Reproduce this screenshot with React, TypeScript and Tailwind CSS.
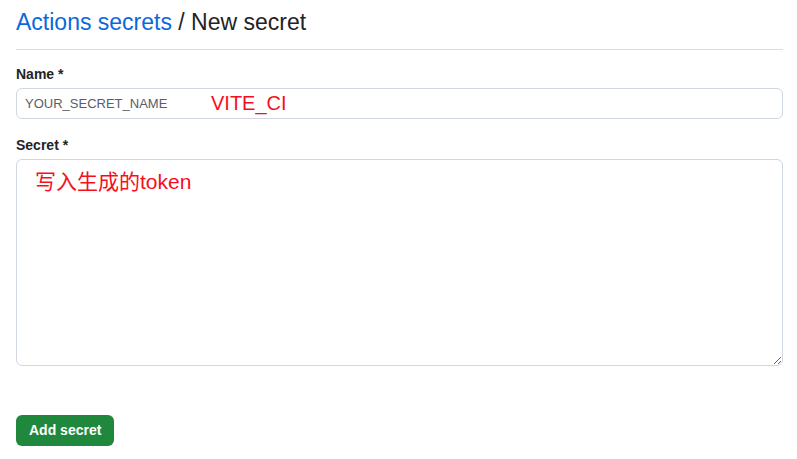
import React from "react";

const font = { fontFamily: '"Liberation Sans", "Noto Sans CJK SC", sans-serif' };

export default function App() {
  return (
    <div className="min-h-screen bg-white pr-[14px] pl-4 font-['Liberation_Sans','Noto_Sans_CJK_SC',sans-serif] text-[#1f2328]">
      {/* header */}
      <div className="border-b border-[#d8dee4] pt-[8px] pb-[12px]">
        <h2 className="text-[23px] leading-[29px]">
          <a className="text-[#0969da]" href="#">
            Actions secrets
          </a>{" "}
          / New secret
        </h2>
      </div>

      <form className="pt-[14px]" onSubmit={(e) => e.preventDefault()}>
        {/* name */}
        <label className="block text-[14px] leading-[21px] font-bold">Name *</label>
        <div className="relative mt-[3px]">
          <input
            className="block h-[31px] w-full rounded-[6px] border border-[#d0d7de] bg-white px-[8px] text-[13px] placeholder-[#57606a] outline-none"
            placeholder="YOUR_SECRET_NAME"
          />
          <span className="pointer-events-none absolute top-[1px] left-[195px] text-[20px] leading-[28px] text-[#f50f1e]">
            VITE_CI
          </span>
        </div>

        {/* secret */}
        <label className="mt-[16px] block text-[14px] leading-[21px] font-bold">Secret *</label>
        <div className="relative mt-[3px]">
          <textarea className="block h-[207px] w-full rounded-[6px] border border-[#d0d7de] bg-white px-[8px] py-[5px] text-[14px] outline-none" />
          <span
            className="pointer-events-none absolute top-[9px] left-[19px] text-[21px] leading-[28px] text-[#f50f1e]"
            style={font}
          >
            写入生成的token
          </span>
        </div>

        <div className="pt-[49px]">
          <button
            type="submit"
            className="h-[31px] rounded-[6px] bg-[#1f883d] px-[13px] text-[14px] font-bold text-white"
          >
            Add secret
          </button>
        </div>
      </form>
    </div>
  );
}
